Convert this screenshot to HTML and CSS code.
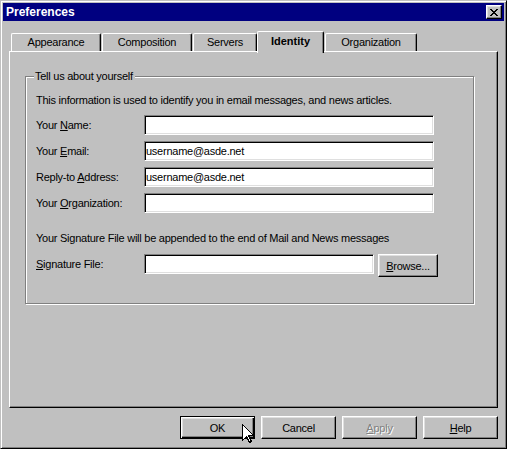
FILE: index.html
```html
<!DOCTYPE html>
<html lang="en">

<head>
    <meta charset="UTF-8">
    <meta name="viewport" content="width=device-width, initial-scale=1.0">
    <title>Preferences</title>
    <link rel="stylesheet" href="styles.css">
</head>

<body>
    <div class="window">
        <div class="titlebar">
            <span class="title">Preferences</span>
            <button class="close" type="button">
                <svg width="8" height="7" viewBox="0 0 8 7" shape-rendering="crispEdges">
                    <path d="M0 0h2v1h-2z M6 0h2v1h-2z M1 1h2v1h-2z M5 1h2v1h-2z M2 2h4v1h-4z M3 3h2v1h-2z M2 4h4v1h-4z M1 5h2v1h-2z M5 5h2v1h-2z M0 6h2v1h-2z M6 6h2v1h-2z" fill="#000" />
                </svg>
            </button>
        </div>

        <div class="content">
            <div class="tabs">
                <div class="tab tab-appearance">Appearance</div>
                <div class="tab tab-composition">Composition</div>
                <div class="tab tab-servers">Servers</div>
                <div class="tab tab-identity active">Identity</div>
                <div class="tab tab-organization">Organization</div>
            </div>

            <div class="panel">
                <fieldset class="group">
                    <legend>Tell us about yourself</legend>
                    <p class="note">This information is used to identify you in email messages, and news articles.</p>
                    <div class="row">
                        <label for="name">Your <u>N</u>ame:</label>
                        <input class="field" type="text" id="name">
                    </div>
                    <div class="row">
                        <label for="email">Your <u>E</u>mail:</label>
                        <input class="field" type="text" id="email" value="username@asde.net">
                    </div>
                    <div class="row">
                        <label for="reply">Reply-to <u>A</u>ddress:</label>
                        <input class="field" type="text" id="reply" value="username@asde.net">
                    </div>
                    <div class="row">
                        <label for="org">Your <u>O</u>rganization:</label>
                        <input class="field" type="text" id="org">
                    </div>
                    <p class="note sig-note">Your Signature File will be appended to the end of Mail and News messages</p>
                    <div class="row sig-row">
                        <label for="sig"><u>S</u>ignature File:</label>
                        <input class="field field-short" type="text" id="sig">
                        <button class="btn btn-browse" type="button"><u>B</u>rowse...</button>
                    </div>
                </fieldset>
            </div>

            <div class="actions">
                <div class="ok-wrap">
                    <button class="btn default" type="button">OK</button>
                    <!-- mouse pointer resting on the OK button -->
                    <svg class="pointer" width="13" height="20" viewBox="0 0 13 20" shape-rendering="crispEdges">
                        <path d="M0.5 0.5 V16.5 L4.5 12.5 L7.5 18.5 L9.5 17.5 L6.5 11.5 H11.5 Z" fill="#fff" stroke="#000" stroke-width="1" />
                    </svg>
                </div>
                <button class="btn" type="button">Cancel</button>
                <button class="btn disabled" type="button" disabled><u>A</u>pply</button>
                <button class="btn" type="button"><u>H</u>elp</button>
            </div>
        </div>
    </div>
</body>

</html>
```

FILE: styles.css
```css
* {
    box-sizing: border-box;
}

body {
    margin: 0;
    padding: 0;
    font-family: 'Liberation Sans', Arial, sans-serif;
    font-size: 11px;
    letter-spacing: -0.25px;
    color: #000;
    background-color: #c0c0c0;
}

.window {
    width: 507px;
    height: 449px;
    background-color: #c0c0c0;
    border: 1px solid;
    border-color: #c0c0c0 #000 #000 #c0c0c0;
    box-shadow: inset 1px 1px #fff, inset -1px -1px #808080;
    padding: 2px;
}

.titlebar {
    height: 18px;
    background-color: #000080;
    display: flex;
    align-items: flex-start;
    justify-content: space-between;
}

.title {
    color: #fff;
    font-weight: bold;
    font-size: 12px;
    letter-spacing: 0;
    line-height: 18px;
    padding-left: 3px;
}

.close {
    width: 16px;
    height: 14px;
    margin: 2px 2px 0 0;
    padding: 0;
    background-color: #c0c0c0;
    border: 1px solid;
    border-color: #fff #000 #000 #fff;
    box-shadow: inset -1px -1px #808080, inset 1px 1px #dfdfdf;
    display: flex;
    align-items: center;
    justify-content: center;
}

.content {
    padding: 0 6px;
}

/* tab strip */

.tabs {
    display: flex;
    align-items: flex-start;
    gap: 1px;
    height: 20px;
    margin-top: 10px;
    padding-left: 2px;
}

.tab {
    height: 18px;
    margin-top: 2px;
    border-top: 1px solid #fff;
    border-left: 1px solid #fff;
    border-right: 1px solid #000;
    border-radius: 2px 2px 0 0;
    box-shadow: inset -1px 0 #808080;
    text-align: center;
    line-height: 17px;
    background-color: #c0c0c0;
}

.tab-appearance {
    width: 90px;
}

.tab-composition {
    width: 90px;
}

.tab-servers {
    width: 64px;
}

.tab-identity {
    width: 67px;
}

.tab-organization {
    width: 92px;
}

.tab.active {
    position: relative;
    z-index: 1;
    height: 22px;
    margin-top: 0;
    margin-left: -1px;
    font-weight: bold;
    letter-spacing: 0;
    line-height: 19px;
}

/* page under the tabs */

.panel {
    width: 489px;
    height: 357px;
    border: 1px solid;
    border-color: #fff #000 #000 #fff;
    box-shadow: inset -1px -1px #808080;
    padding: 17px 0 0 15px;
}

.group {
    width: 449px;
    margin: 0;
    padding: 10px 0 26px 10px;
    border: 1px solid #808080;
    box-shadow: 1px 1px #fff, inset 1px 1px #fff;
}

.group legend {
    margin-left: -2px;
    padding: 0 2px 0 1px;
    line-height: 14px;
    background-color: #c0c0c0;
}

.note {
    margin: 0;
    line-height: 14px;
}

.row {
    display: flex;
    align-items: center;
    height: 20px;
    margin-top: 6px;
}

.row:first-of-type {
    margin-top: 8px;
}

.row label {
    width: 108px;
}

.field {
    width: 290px;
    height: 20px;
    padding: 0 1px;
    font-family: inherit;
    font-size: 11px;
    letter-spacing: inherit;
    color: #000;
    background-color: #fff;
    border: 1px solid;
    border-color: #808080 #fff #fff #808080;
    box-shadow: inset 1px 1px #000, inset -1px -1px #dfdfdf;
    outline: none;
}

.field-short {
    width: 230px;
}

.sig-note {
    margin-top: 18px;
}

.sig-row {
    align-items: flex-start;
    height: 23px;
    margin-top: 9px;
}

.sig-row label {
    line-height: 20px;
}

/* push buttons */

.btn {
    width: 75px;
    height: 23px;
    padding: 0;
    font-family: inherit;
    font-size: 11px;
    letter-spacing: inherit;
    color: #000;
    background-color: #c0c0c0;
    border: 1px solid;
    border-color: #fff #000 #000 #fff;
    box-shadow: inset -1px -1px #808080, inset 1px 1px #dfdfdf;
}

.btn-browse {
    width: 60px;
    margin-left: 4px;
}

.btn.default {
    border-color: #000;
    box-shadow: inset 1px 1px #fff, inset -1px -1px #000, inset -2px -2px #808080, inset 2px 2px #dfdfdf;
}

.btn.disabled {
    color: #808080;
    text-shadow: 1px 1px #fff;
}

.actions {
    display: flex;
    justify-content: flex-end;
    gap: 6px;
    margin-top: 8px;
}

.ok-wrap {
    position: relative;
    height: 23px;
}

.pointer {
    position: absolute;
    left: 62px;
    top: 8px;
}
```
